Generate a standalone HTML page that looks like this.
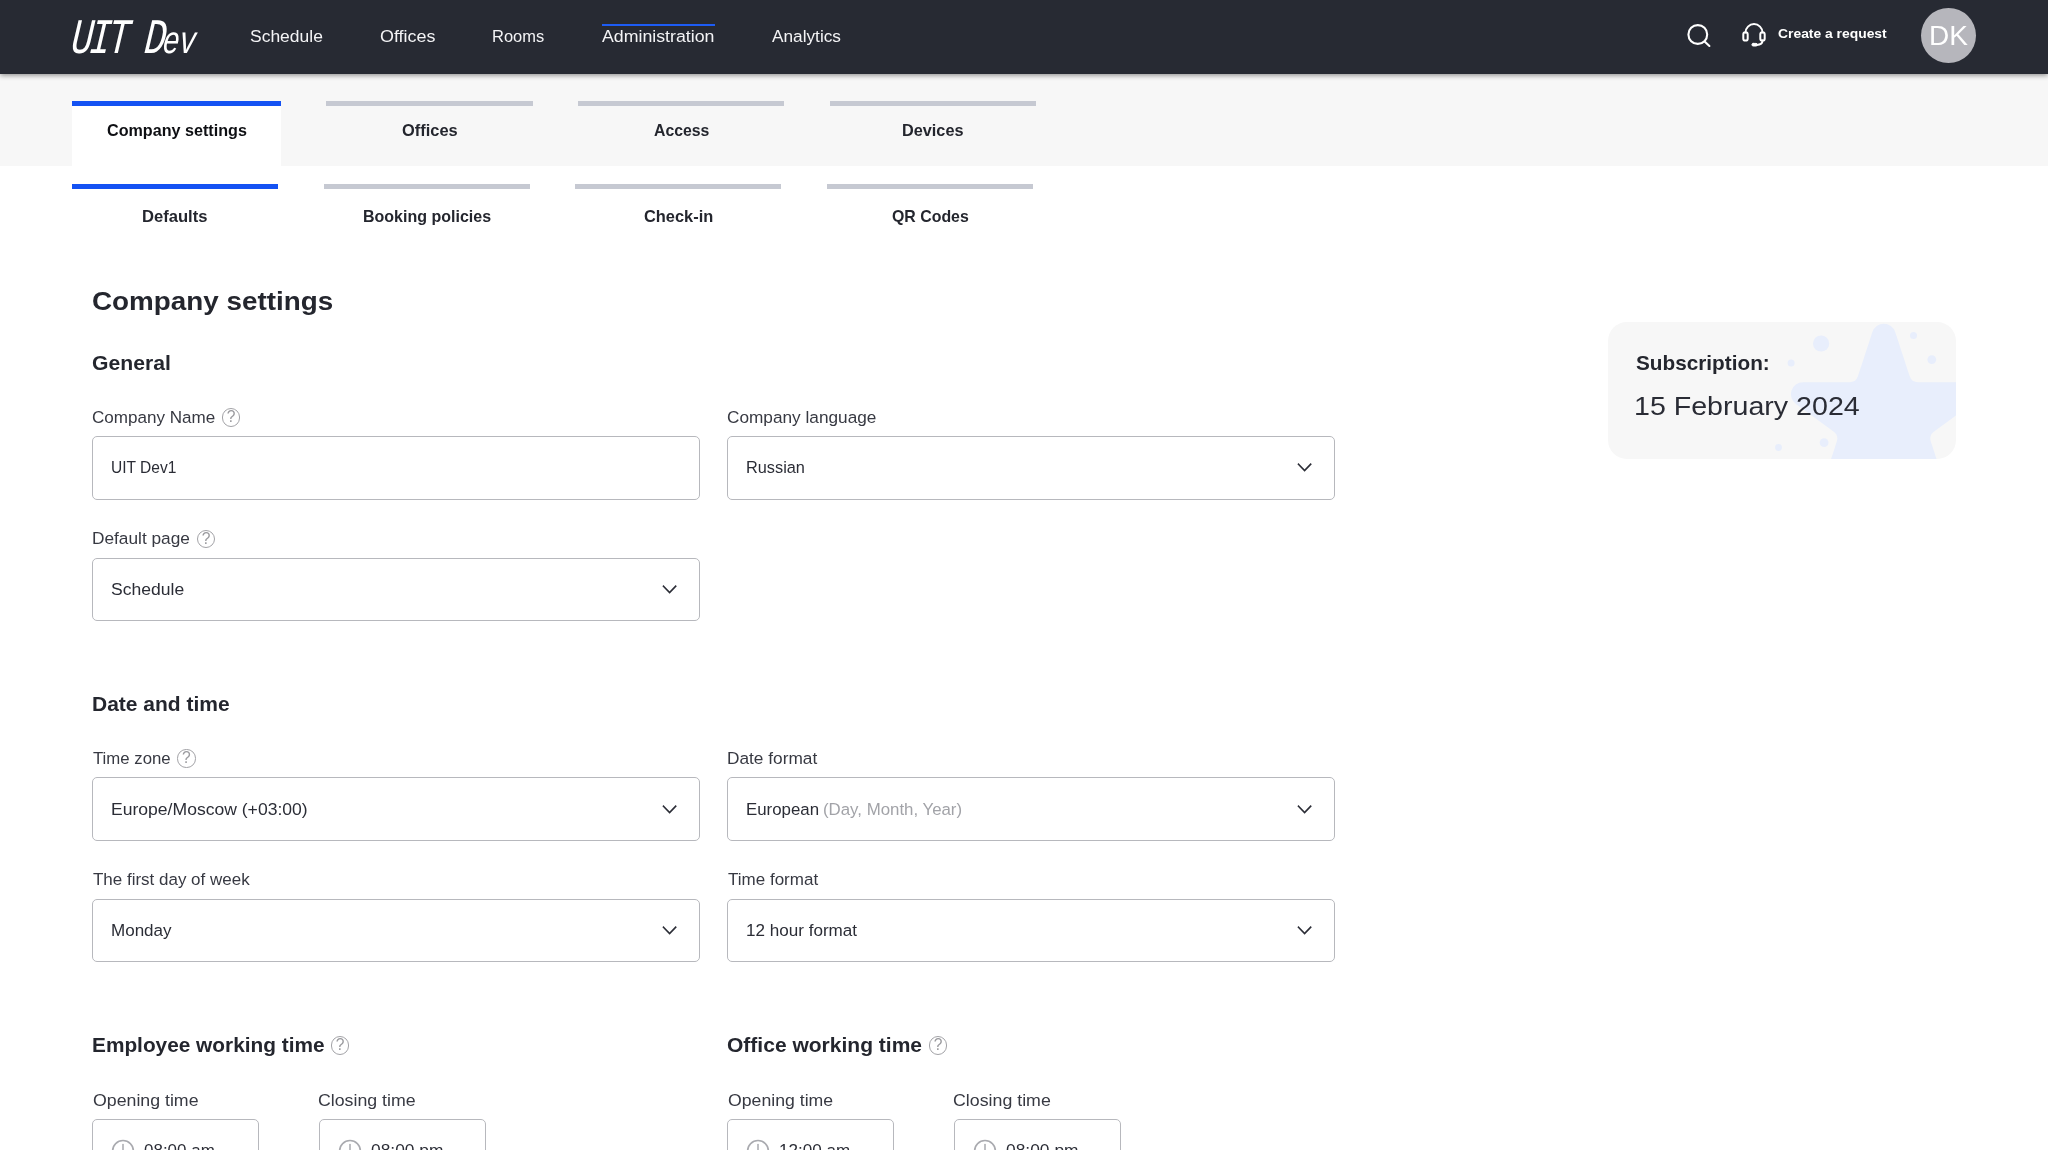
<!DOCTYPE html>
<html lang="en">
<head>
<meta charset="utf-8">
<title>Company settings</title>
<style>
*{box-sizing:border-box;margin:0;padding:0}
html,body{width:2048px;height:1150px;overflow:hidden;background:#fff}
body{font-family:"Liberation Sans",sans-serif;color:#24262e;position:relative}
#root{position:absolute;left:0;top:0;width:2048px;height:1150px;will-change:transform}
.abs{position:absolute;white-space:nowrap;line-height:1;transform-origin:0 0}
#hdr{position:absolute;left:0;top:0;width:2048px;height:73.6px;background:#272a33;box-shadow:0 1.5px 5px rgba(0,0,0,.42);z-index:5}
#logo{left:69.6px;top:15.8px;font-family:"Liberation Mono",monospace;font-size:49.6px;font-style:italic;color:#fff;transform-origin:0 80%;transform:scaleX(.74) skewX(-7deg);letter-spacing:-5px}
#logo span{font-size:.78em;letter-spacing:-1.2px}
#navline{position:absolute;left:602px;top:24px;width:112.6px;height:2px;background:#1d5cf5}
#ava{position:absolute;left:1920.8px;top:7.8px;width:55.2px;height:55.2px;border-radius:50%;background:#b6b6bc}
#sub{position:absolute;left:0;top:73px;width:2048px;height:93px;background:#f7f7f7}
.t1{position:absolute;top:101.4px;height:64.4px;border-top:5.1px solid #c6c9d2}
.t1.on{background:#fff;border-top-color:#1452f3}
.t2{position:absolute;top:184px;height:10px;border-top:5px solid #c6c9d2}
.t2.on{border-top-color:#1452f3}
.box{position:absolute;height:63.6px;border:1.6px solid #b7b8bd;border-radius:5px;background:#fff}
.chev{position:absolute;right:22px;top:26.25px;width:15.2px;height:9.5px}
.q{position:absolute;width:18.4px;height:18.4px;border:1.4px solid #a2a2a6;border-radius:50%;color:#9a9a9e;font-size:15.6px;line-height:16.4px;text-align:center}
.clk{position:absolute;left:17.8px;top:18.6px;width:24px;height:24px}
#card{position:absolute;left:1608px;top:321.5px;width:348px;height:137.2px;border-radius:19px;background:#f7f7f7;overflow:hidden}

</style>
</head>
<body>
<div id="root">
<div id="sub"></div>
<div id="hdr">
<div id="logo" class="abs">UIT D<span>ev</span></div>
<div id="navline"></div>
<svg style="position:absolute;left:1685px;top:22px" width="28" height="28" viewBox="0 0 28 28" fill="none" stroke="#fff" stroke-width="2.1" stroke-linecap="round"><circle cx="12.8" cy="12.5" r="9.4"/><path d="M19.6 19.4 24.4 24"/></svg>
<svg style="position:absolute;left:1740px;top:21px" width="28" height="28" viewBox="0 0 28 28" fill="none" stroke="#fff" stroke-width="2" stroke-linecap="round" stroke-linejoin="round"><path d="M5.5 11.6a8.5 8.5 0 0 1 17 0"/><rect x="3.3" y="11.2" width="4.4" height="8.4" rx="2.2"/><rect x="20.3" y="11.2" width="4.4" height="8.4" rx="2.2"/><path d="M22.5 19.6c0 2.8-2.3 4.3-5.8 4.3"/><rect x="11.9" y="22.4" width="5.4" height="2.6" rx="1.3" fill="#fff" stroke-width="1"/></svg>

<div id="ava"></div>
<div class="abs" style="left:250.25px;top:28.56px;font-size:16.7px;transform:scaleX(1.0471);color:#f4f4f6">Schedule</div>
<div class="abs" style="left:379.63px;top:28.56px;font-size:16.7px;transform:scaleX(1.0720);color:#f4f4f6">Offices</div>
<div class="abs" style="left:491.61px;top:28.56px;font-size:16.7px;transform:scaleX(0.9865);color:#f4f4f6">Rooms</div>
<div class="abs" style="left:602.10px;top:28.56px;font-size:16.7px;transform:scaleX(1.0629);color:#f4f4f6">Administration</div>
<div class="abs" style="left:772.20px;top:28.56px;font-size:16.7px;transform:scaleX(1.0328);color:#f4f4f6">Analytics</div>
<div class="abs" style="left:1777.50px;top:27.17px;font-size:13.5px;transform:scaleX(1.0274);font-weight:700;color:#fff">Create a request</div>
<div class="abs" style="left:1928.58px;top:22.27px;font-size:27.8px;transform:scaleX(1.0083);color:#fff">DK</div>
</div>
<div class="t1 on" style="left:72px;width:209px"></div>
<div class="t1" style="left:326.4px;width:206.4px"></div>
<div class="t1" style="left:578px;width:206.4px"></div>
<div class="t1" style="left:829.8px;width:206.4px"></div>
<div class="t2 on" style="left:72px;width:206px"></div>
<div class="t2" style="left:323.8px;width:206px"></div>
<div class="t2" style="left:575.4px;width:206px"></div>
<div class="t2" style="left:827.2px;width:206px"></div>
<div class="box" style="left:92.2px;top:436.1px;width:607.6px"></div>
<div class="box" style="left:727.1px;top:436.1px;width:607.6px"><svg class="chev" viewBox="0 0 16 10" fill="none" stroke="#2b2d36" stroke-width="1.7" stroke-linecap="square"><path d="M1.6 1.3 8 7.9 14.4 1.3"/></svg></div>
<div class="box" style="left:92.2px;top:557.5px;width:607.6px"><svg class="chev" viewBox="0 0 16 10" fill="none" stroke="#2b2d36" stroke-width="1.7" stroke-linecap="square"><path d="M1.6 1.3 8 7.9 14.4 1.3"/></svg></div>
<div class="box" style="left:92.2px;top:777.4px;width:607.6px"><svg class="chev" viewBox="0 0 16 10" fill="none" stroke="#2b2d36" stroke-width="1.7" stroke-linecap="square"><path d="M1.6 1.3 8 7.9 14.4 1.3"/></svg></div>
<div class="box" style="left:727.1px;top:777.4px;width:607.6px"><svg class="chev" viewBox="0 0 16 10" fill="none" stroke="#2b2d36" stroke-width="1.7" stroke-linecap="square"><path d="M1.6 1.3 8 7.9 14.4 1.3"/></svg></div>
<div class="box" style="left:92.2px;top:898.5px;width:607.6px"><svg class="chev" viewBox="0 0 16 10" fill="none" stroke="#2b2d36" stroke-width="1.7" stroke-linecap="square"><path d="M1.6 1.3 8 7.9 14.4 1.3"/></svg></div>
<div class="box" style="left:727.1px;top:898.5px;width:607.6px"><svg class="chev" viewBox="0 0 16 10" fill="none" stroke="#2b2d36" stroke-width="1.7" stroke-linecap="square"><path d="M1.6 1.3 8 7.9 14.4 1.3"/></svg></div>
<div class="box" style="left:92.2px;top:1119.2px;width:166.7px"><svg class="clk" viewBox="0 0 24 24" fill="none" stroke="#a9aaaf" stroke-width="1.5" stroke-linecap="round"><circle cx="12" cy="12" r="10.4"/><path d="M12 5.4V12.4"/></svg></div>
<div class="box" style="left:319.2px;top:1119.2px;width:166.7px"><svg class="clk" viewBox="0 0 24 24" fill="none" stroke="#a9aaaf" stroke-width="1.5" stroke-linecap="round"><circle cx="12" cy="12" r="10.4"/><path d="M12 5.4V12.4"/></svg></div>
<div class="box" style="left:727.2px;top:1119.2px;width:166.7px"><svg class="clk" viewBox="0 0 24 24" fill="none" stroke="#a9aaaf" stroke-width="1.5" stroke-linecap="round"><circle cx="12" cy="12" r="10.4"/><path d="M12 5.4V12.4"/></svg></div>
<div class="box" style="left:953.9px;top:1119.2px;width:166.7px"><svg class="clk" viewBox="0 0 24 24" fill="none" stroke="#a9aaaf" stroke-width="1.5" stroke-linecap="round"><circle cx="12" cy="12" r="10.4"/><path d="M12 5.4V12.4"/></svg></div>
<div class="q" style="left:221.8px;top:408.4px">?</div>
<div class="q" style="left:196.8px;top:529.6px">?</div>
<div class="q" style="left:177.2px;top:749.4px">?</div>
<div class="q" style="left:331.0px;top:1036.3px">?</div>
<div class="q" style="left:929.0px;top:1036.3px">?</div>
<div id="card"><svg style="position:absolute;left:0;top:0" width="348" height="138" viewBox="0 0 348 138"><path d="M264.4 9.9L264.4 9.9A12 12 0 0 1 287.2 9.9L301.6 54.1A9 9 0 0 0 310.1 60.3L356.7 60.3A12 12 0 0 1 363.7 82.0L326.1 109.4A9 9 0 0 0 322.8 119.4L337.2 163.7A12 12 0 0 1 318.7 177.1L281.1 149.7A9 9 0 0 0 270.5 149.7L232.9 177.1A12 12 0 0 1 214.4 163.7L228.8 119.4A9 9 0 0 0 225.5 109.4L187.9 82.0A12 12 0 0 1 194.9 60.3L241.5 60.3A9 9 0 0 0 250.0 54.1Z" fill="#e8eefc"/><circle cx="213.1" cy="21.5" r="8.1" fill="#e8eefc"/><circle cx="183.1" cy="40.9" r="3.5" fill="#e8eefc"/><circle cx="305.5" cy="13.5" r="3.5" fill="#e8eefc"/><circle cx="323.8" cy="37.6" r="4.4" fill="#e8eefc"/><circle cx="216.1" cy="120.7" r="4.4" fill="#e8eefc"/><circle cx="170.5" cy="125.5" r="3.4" fill="#e8eefc"/></svg></div>
<div class="abs" style="left:106.50px;top:122.02px;font-size:16.4px;transform:scaleX(0.9845);font-weight:700;color:#0e0f13">Company settings</div>
<div class="abs" style="left:401.70px;top:122.02px;font-size:16.4px;transform:scaleX(1.0018);font-weight:700">Offices</div>
<div class="abs" style="left:654.00px;top:122.02px;font-size:16.4px;transform:scaleX(0.9649);font-weight:700">Access</div>
<div class="abs" style="left:902.41px;top:122.02px;font-size:16.4px;transform:scaleX(0.9918);font-weight:700">Devices</div>
<div class="abs" style="left:142.29px;top:207.82px;font-size:16.4px;transform:scaleX(1.0127);font-weight:700">Defaults</div>
<div class="abs" style="left:362.52px;top:207.82px;font-size:16.4px;transform:scaleX(0.9769);font-weight:700">Booking policies</div>
<div class="abs" style="left:644.00px;top:207.82px;font-size:16.4px;transform:scaleX(1.0000);font-weight:700">Check-in</div>
<div class="abs" style="left:892.00px;top:207.82px;font-size:16.4px;transform:scaleX(0.9684);font-weight:700">QR Codes</div>
<div class="abs" style="left:91.51px;top:289.03px;font-size:25.6px;transform:scaleX(1.0873);font-weight:700">Company settings</div>
<div class="abs" style="left:91.56px;top:353.02px;font-size:20.3px;transform:scaleX(1.0432);font-weight:700">General</div>
<div class="abs" style="left:91.76px;top:693.82px;font-size:20.3px;transform:scaleX(1.0356);font-weight:700">Date and time</div>
<div class="abs" style="left:91.77px;top:1034.82px;font-size:20.3px;transform:scaleX(1.0264);font-weight:700">Employee working time</div>
<div class="abs" style="left:726.66px;top:1034.82px;font-size:20.3px;transform:scaleX(1.0364);font-weight:700">Office working time</div>
<div class="abs" style="left:91.65px;top:409.10px;font-size:16.3px;transform:scaleX(1.0483);color:#373942">Company Name</div>
<div class="abs" style="left:726.74px;top:409.10px;font-size:16.3px;transform:scaleX(1.0579);color:#373942">Company language</div>
<div class="abs" style="left:91.84px;top:530.40px;font-size:16.3px;transform:scaleX(1.0604);color:#373942">Default page</div>
<div class="abs" style="left:92.80px;top:750.40px;font-size:16.3px;transform:scaleX(1.0293);color:#373942">Time zone</div>
<div class="abs" style="left:726.74px;top:750.40px;font-size:16.3px;transform:scaleX(1.0607);color:#373942">Date format</div>
<div class="abs" style="left:92.80px;top:871.40px;font-size:16.3px;transform:scaleX(1.0427);color:#373942">The first day of week</div>
<div class="abs" style="left:727.80px;top:871.40px;font-size:16.3px;transform:scaleX(1.0454);color:#373942">Time format</div>
<div class="abs" style="left:92.60px;top:1091.80px;font-size:16.3px;transform:scaleX(1.0896);color:#373942">Opening time</div>
<div class="abs" style="left:318.21px;top:1091.80px;font-size:16.3px;transform:scaleX(1.0898);color:#373942">Closing time</div>
<div class="abs" style="left:727.70px;top:1091.80px;font-size:16.3px;transform:scaleX(1.0854);color:#373942">Opening time</div>
<div class="abs" style="left:953.21px;top:1091.80px;font-size:16.3px;transform:scaleX(1.0920);color:#373942">Closing time</div>
<div class="abs" style="left:111.24px;top:459.20px;font-size:16.3px;transform:scaleX(0.9552);color:#2b2d36">UIT Dev1</div>
<div class="abs" style="left:746.30px;top:459.20px;font-size:16.3px;transform:scaleX(1.0018);color:#2b2d36">Russian</div>
<div class="abs" style="left:111.12px;top:580.80px;font-size:16.3px;transform:scaleX(1.0773);color:#2b2d36">Schedule</div>
<div class="abs" style="left:111.02px;top:800.60px;font-size:16.3px;transform:scaleX(1.0785);color:#2b2d36">Europe/Moscow (+03:00)</div>
<div class="abs" style="left:746.26px;top:800.60px;font-size:16.3px;transform:scaleX(1.0355);color:#2b2d36">European</div>
<div class="abs" style="left:823.37px;top:800.60px;font-size:16.3px;transform:scaleX(1.0338);color:#a2a3a8">(Day, Month, Year)</div>
<div class="abs" style="left:111.25px;top:921.60px;font-size:16.3px;transform:scaleX(1.0456);color:#2b2d36">Monday</div>
<div class="abs" style="left:745.55px;top:921.60px;font-size:16.3px;transform:scaleX(1.0486);color:#2b2d36">12 hour format</div>
<div class="abs" style="left:144.20px;top:1142.10px;font-size:16.3px;transform:scaleX(1.0433);color:#2b2d36">08:00 am</div>
<div class="abs" style="left:370.90px;top:1142.10px;font-size:16.3px;transform:scaleX(1.0672);color:#2b2d36">08:00 pm</div>
<div class="abs" style="left:778.75px;top:1142.10px;font-size:16.3px;transform:scaleX(1.0500);color:#2b2d36">12:00 am</div>
<div class="abs" style="left:1005.80px;top:1142.10px;font-size:16.3px;transform:scaleX(1.0687);color:#2b2d36">08:00 pm</div>
<div class="abs" style="left:1635.70px;top:353.23px;font-size:20.4px;transform:scaleX(1.0177);font-weight:700">Subscription:</div>
<div class="abs" style="left:1633.53px;top:393.25px;font-size:26.4px;transform:scaleX(1.0835);color:#2a2c35">15 February 2024</div>
</div>
</body>
</html>
